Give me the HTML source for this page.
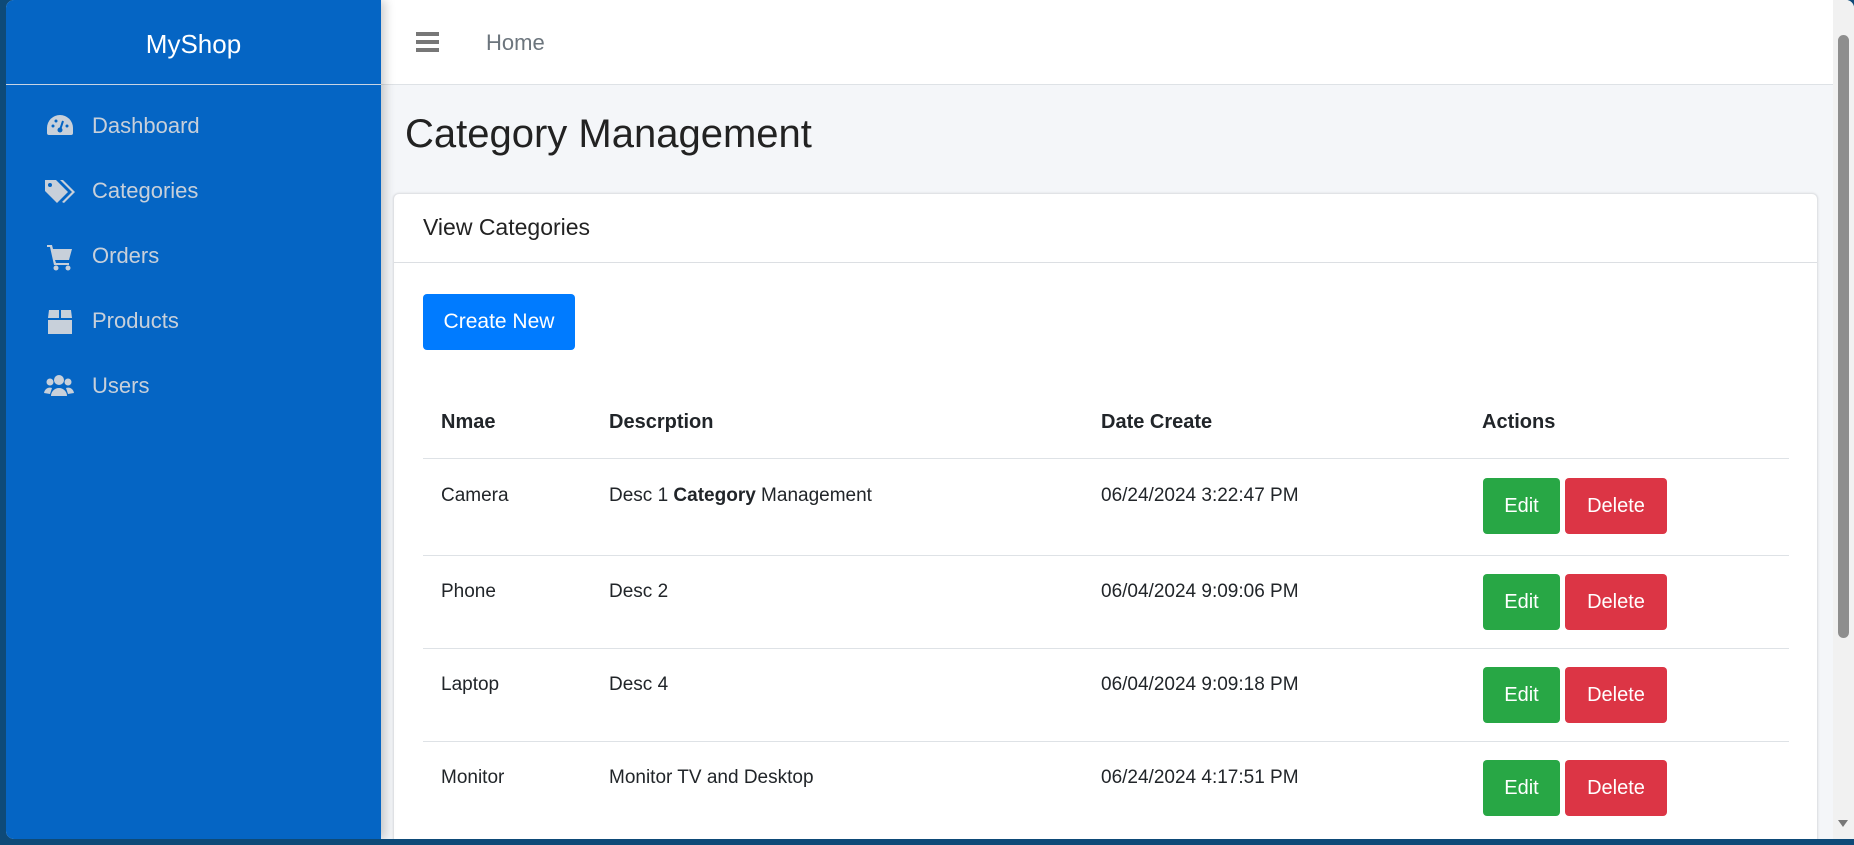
<!DOCTYPE html>
<html><head><meta charset="utf-8"><style>
*{box-sizing:border-box;margin:0;padding:0}
body{width:1854px;height:845px;overflow:hidden;background:#0e4a78;font-family:"Liberation Sans",sans-serif;position:relative}
.win{position:absolute;left:6px;top:0;width:1848px;height:839px;background:#f4f6f9;border-radius:8px 8px 0 8px;overflow:hidden}
.side{position:absolute;left:0;top:0;width:375px;height:839px;background:#0565c4;box-shadow:4px 0 10px rgba(0,0,0,.2);z-index:2}
.brand{height:85px;border-bottom:1px solid #c8d4e4;color:#fff;font-size:26px;text-align:center;line-height:88px;font-weight:300}
.it{position:absolute;left:0;height:40px;width:100%;color:#c8d0da;font-size:22px;line-height:40px}
.it span{position:absolute;left:86px}
.it svg{position:absolute;left:40px;top:7px}
.top{position:absolute;left:375px;top:0;width:1452px;height:85px;background:#fff;border-bottom:1px solid #dee2e6}
.ham{position:absolute;left:35px;top:32px;width:23px}
.ham i{display:block;height:4px;background:#777;margin-bottom:4px}
.home{position:absolute;left:105px;top:30px;font-size:22px;color:#6c757d}
h1{position:absolute;left:399px;top:112px;font-size:40px;font-weight:400;color:#222}
.card{position:absolute;left:387px;top:193px;width:1425px;height:660px;background:#fff;border:1px solid #e1e3e6;border-radius:6px;box-shadow:0 0 2px rgba(0,0,0,.1)}
.ch{height:69px;border-bottom:1px solid #dcdfe3;font-size:23px;color:#222;padding:20px 0 0 29px}
.btn{position:absolute;color:#fff !important;border-radius:4px;text-align:center}
.cn{left:29px;top:100px;width:152px;height:56px;background:#007bff;font-size:21px;line-height:56px}
.th{position:absolute;font-weight:bold;font-size:20px;color:#212529;top:217px}
.row{position:absolute;left:29px;width:1366px;border-top:1px solid #dee2e6}
.row div{position:absolute;font-size:19px;color:#212529}
.row .ed{background:#28a745;width:77px;height:56px;line-height:56px;font-size:20px}
.row .de{background:#dc3545;width:102px;height:56px;line-height:56px;font-size:20px}
.sb{position:absolute;right:0;top:0;width:21px;height:839px;background:#f1f1f1}
.th2{position:absolute;left:5px;top:35px;width:11px;height:603px;background:#8e8e8e;border-radius:6px}
</style></head><body>
<div class="win">
<div class="side">
<div class="brand">MyShop</div>
<div class="it" style="top:106px"><svg width="28" height="26" viewBox="0 0 28 26"><path d="M14 2A13 13 0 0 0 1 15v5a2 2 0 0 0 2 2h22a2 2 0 0 0 2-2v-5A13 13 0 0 0 14 2z" fill="#c8d0da"/><circle cx="14" cy="17" r="2.5" fill="#0565c4"/><path d="M14 17l3-9" stroke="#0565c4" stroke-width="2"/><circle cx="7" cy="13" r="1.5" fill="#0565c4"/><circle cx="10" cy="8" r="1.5" fill="#0565c4"/><circle cx="21" cy="13" r="1.5" fill="#0565c4"/></svg><span>Dashboard</span></div>
<div class="it" style="top:171px"><svg width="32" height="28" viewBox="0 0 32 28" style="left:38px"><path d="M1 2h11l12 12-11 11L1 13z" fill="#c8d0da"/><circle cx="6" cy="7" r="2" fill="#0565c4"/><path d="M16 2h3l12 12-11 11-2-1 10-10z" fill="#c8d0da"/></svg><span>Categories</span></div>
<div class="it" style="top:236px"><svg width="28" height="28" viewBox="0 0 28 28"><path d="M1 2h5l1 4h19l-3 11H9l1 3h13v2H8L4 4H1z" fill="#c8d0da"/><circle cx="10" cy="25" r="2.5" fill="#c8d0da"/><circle cx="22" cy="25" r="2.5" fill="#c8d0da"/></svg><span>Orders</span></div>
<div class="it" style="top:301px"><svg width="28" height="28" viewBox="0 0 28 28"><path d="M3 2h10v8H2zM15 2h10l1 8H15zM2 12h24v14H2z" fill="#c8d0da"/></svg><span>Products</span></div>
<div class="it" style="top:366px"><svg width="30" height="26" viewBox="0 0 30 26" style="left:38px"><circle cx="15" cy="7" r="5" fill="#c8d0da"/><circle cx="6" cy="9" r="3.5" fill="#c8d0da"/><circle cx="24" cy="9" r="3.5" fill="#c8d0da"/><path d="M7 23a8 8 0 0 1 16 0zM0 20a6 6 0 0 1 8-5l-2 6zM30 20a6 6 0 0 0-8-5l2 6z" fill="#c8d0da"/></svg><span>Users</span></div>
</div>
<div class="top"><div class="ham"><i></i><i></i><i></i></div><div class="home">Home</div></div>
<h1>Category Management</h1>
<div class="card">
<div class="ch">View Categories</div>
<div class="btn cn">Create New</div>
<div class="th" style="left:47px">Nmae</div>
<div class="th" style="left:215px">Descrption</div>
<div class="th" style="left:707px">Date Create</div>
<div class="th" style="left:1088px">Actions</div>
<div class="row" style="top:264px"><div style="left:18px;top:26px">Camera</div><div style="left:186px;top:26px">Desc 1 <b>Category</b> Management</div><div style="left:678px;top:26px">06/24/2024 3:22:47 PM</div><div class="btn ed" style="left:1060px;top:19px">Edit</div><div class="btn de" style="left:1142px;top:19px">Delete</div></div>
<div class="row" style="top:361px"><div style="left:18px;top:25px">Phone</div><div style="left:186px;top:25px">Desc 2</div><div style="left:678px;top:25px">06/04/2024 9:09:06 PM</div><div class="btn ed" style="left:1060px;top:18px">Edit</div><div class="btn de" style="left:1142px;top:18px">Delete</div></div>
<div class="row" style="top:454px"><div style="left:18px;top:25px">Laptop</div><div style="left:186px;top:25px">Desc 4</div><div style="left:678px;top:25px">06/04/2024 9:09:18 PM</div><div class="btn ed" style="left:1060px;top:18px">Edit</div><div class="btn de" style="left:1142px;top:18px">Delete</div></div>
<div class="row" style="top:547px;height:120px"><div style="left:18px;top:25px">Monitor</div><div style="left:186px;top:25px">Monitor TV and Desktop</div><div style="left:678px;top:25px">06/24/2024 4:17:51 PM</div><div class="btn ed" style="left:1060px;top:18px">Edit</div><div class="btn de" style="left:1142px;top:18px">Delete</div></div>
</div>
<div class="sb"><div class="th2"></div><div style="position:absolute;left:5px;top:820px;border:5px solid transparent;border-top:7px solid #777;border-bottom:0"></div></div>
</div>
</body></html>
